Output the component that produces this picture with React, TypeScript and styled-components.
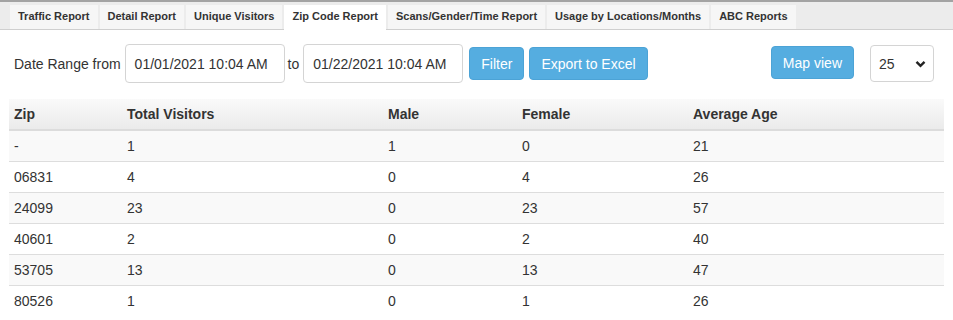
import React from "react";
import styled, { createGlobalStyle } from "styled-components";

const GlobalStyle = createGlobalStyle`
  body {
    margin: 0;
    background: #fff;
    font-family: "Liberation Sans", Arial, sans-serif;
    color: #333;
  }
`;

// Report tabs across the top
const TabBar = styled.div`
  display: flex;
  gap: 2px;
  height: 24px;
  padding: 3px 10px 0;
  background: #ececec;
  border-top: 2px solid #a3a3a3;
  border-bottom: 1px solid #cfcfcf;
`;

const Tab = styled.div<{ $active?: boolean }>`
  line-height: 23px;
  padding: 0 8px;
  font-size: 11px;
  font-weight: bold;
  color: #333;
  background: ${(p) => (p.$active ? "#fff" : "#f6f6f6")};
  margin-bottom: ${(p) => (p.$active ? "-1px" : "0")};
  height: ${(p) => (p.$active ? "25px" : "24px")};
  white-space: nowrap;
`;

// Date range + actions
const FilterRow = styled.div`
  display: flex;
  align-items: center;
  padding: 14px 19px 0 14px;
  font-size: 14px;
`;

const Label = styled.span`
  color: #333;
  margin-right: 4px;
`;

const ToLabel = styled.span`
  margin: 0 4px 0 3px;
`;

const DateInput = styled.div`
  box-sizing: border-box;
  width: 160px;
  height: 39px;
  padding: 0 9px;
  display: flex;
  align-items: center;
  border: 1px solid #d4d4d4;
  border-radius: 4px;
  color: #333;
  background: #fff;
`;

const Button = styled.button<{ $gap?: number; $lift?: number }>`
  box-sizing: border-box;
  height: 33px;
  padding: 0 11px;
  margin-left: ${(p) => p.$gap ?? 0}px;
  margin-top: ${(p) => -(p.$lift ?? 0) * 2}px;
  background: #55ade0;
  border: 1px solid #4ca3d6;
  border-radius: 4px;
  color: #fff;
  font-family: "Liberation Sans", Arial, sans-serif;
  font-size: 14px;
  cursor: pointer;
`;

const Spacer = styled.div`
  flex: 1;
`;

const PageSize = styled.div`
  box-sizing: border-box;
  width: 64px;
  height: 37px;
  margin-left: 16px;
  padding: 0 7px 0 8px;
  display: flex;
  align-items: center;
  justify-content: space-between;
  border: 1px solid #d4d4d4;
  border-radius: 4px;
  background: #fff;
  color: #333;
`;

// Data table
const Table = styled.table`
  margin: 16px 9px 0;
  width: 935px;
  table-layout: fixed;
  border-collapse: collapse;
  font-size: 14px;
`;

const Th = styled.th<{ $w?: number }>`
  width: ${(p) => (p.$w ? `${p.$w - 10}px` : "auto")};
  text-align: left;
  font-weight: bold;
  padding: 5px 5px;
  line-height: 20px;
  color: #333;
  background: linear-gradient(#fafafa, #ebebeb);
  border-bottom: 2px solid #dcdcdc;
`;

const Tr = styled.tr<{ $striped?: boolean }>`
  background: ${(p) => (p.$striped ? "#f9f9f9" : "#fff")};
`;

const Td = styled.td`
  padding: 5px 5px;
  line-height: 20px;
  border-top: 1px solid #dddddd;
  color: #333;
`;

const rows = [
  ["-", "1", "1", "0", "21"],
  ["06831", "4", "0", "4", "26"],
  ["24099", "23", "0", "23", "57"],
  ["40601", "2", "0", "2", "40"],
  ["53705", "13", "0", "13", "47"],
  ["80526", "1", "0", "1", "26"],
];

const tabs = [
  "Traffic Report",
  "Detail Report",
  "Unique Visitors",
  "Zip Code Report",
  "Scans/Gender/Time Report",
  "Usage by Locations/Months",
  "ABC Reports",
];

export default function App() {
  return (
    <>
      <GlobalStyle />
      <TabBar>
        {tabs.map((t) => (
          <Tab key={t} $active={t === "Zip Code Report"}>
            {t}
          </Tab>
        ))}
      </TabBar>

      <FilterRow>
        <Label>Date Range from</Label>
        <DateInput>01/01/2021 10:04 AM</DateInput>
        <ToLabel>to</ToLabel>
        <DateInput>01/22/2021 10:04 AM</DateInput>
        <Button $gap={6}>Filter</Button>
        <Button $gap={5}>Export to Excel</Button>
        <Spacer />
        <Button $lift={1}>Map view</Button>
        <PageSize>
          <span>25</span>
          <svg width="11" height="8" viewBox="0 0 11 8">
            <path d="M1.5 1.8 L5.5 5.8 L9.5 1.8" fill="none" stroke="#222" strokeWidth="2.4" />
          </svg>
        </PageSize>
      </FilterRow>

      <Table>
        <thead>
          <tr>
            <Th $w={113}>Zip</Th>
            <Th $w={261}>Total Visitors</Th>
            <Th $w={134}>Male</Th>
            <Th $w={171}>Female</Th>
            <Th>Average Age</Th>
          </tr>
        </thead>
        <tbody>
          {rows.map((r, i) => (
            <Tr key={r[0]} $striped={i % 2 === 0}>
              {r.map((c, j) => (
                <Td key={j}>{c}</Td>
              ))}
            </Tr>
          ))}
        </tbody>
      </Table>
    </>
  );
}
